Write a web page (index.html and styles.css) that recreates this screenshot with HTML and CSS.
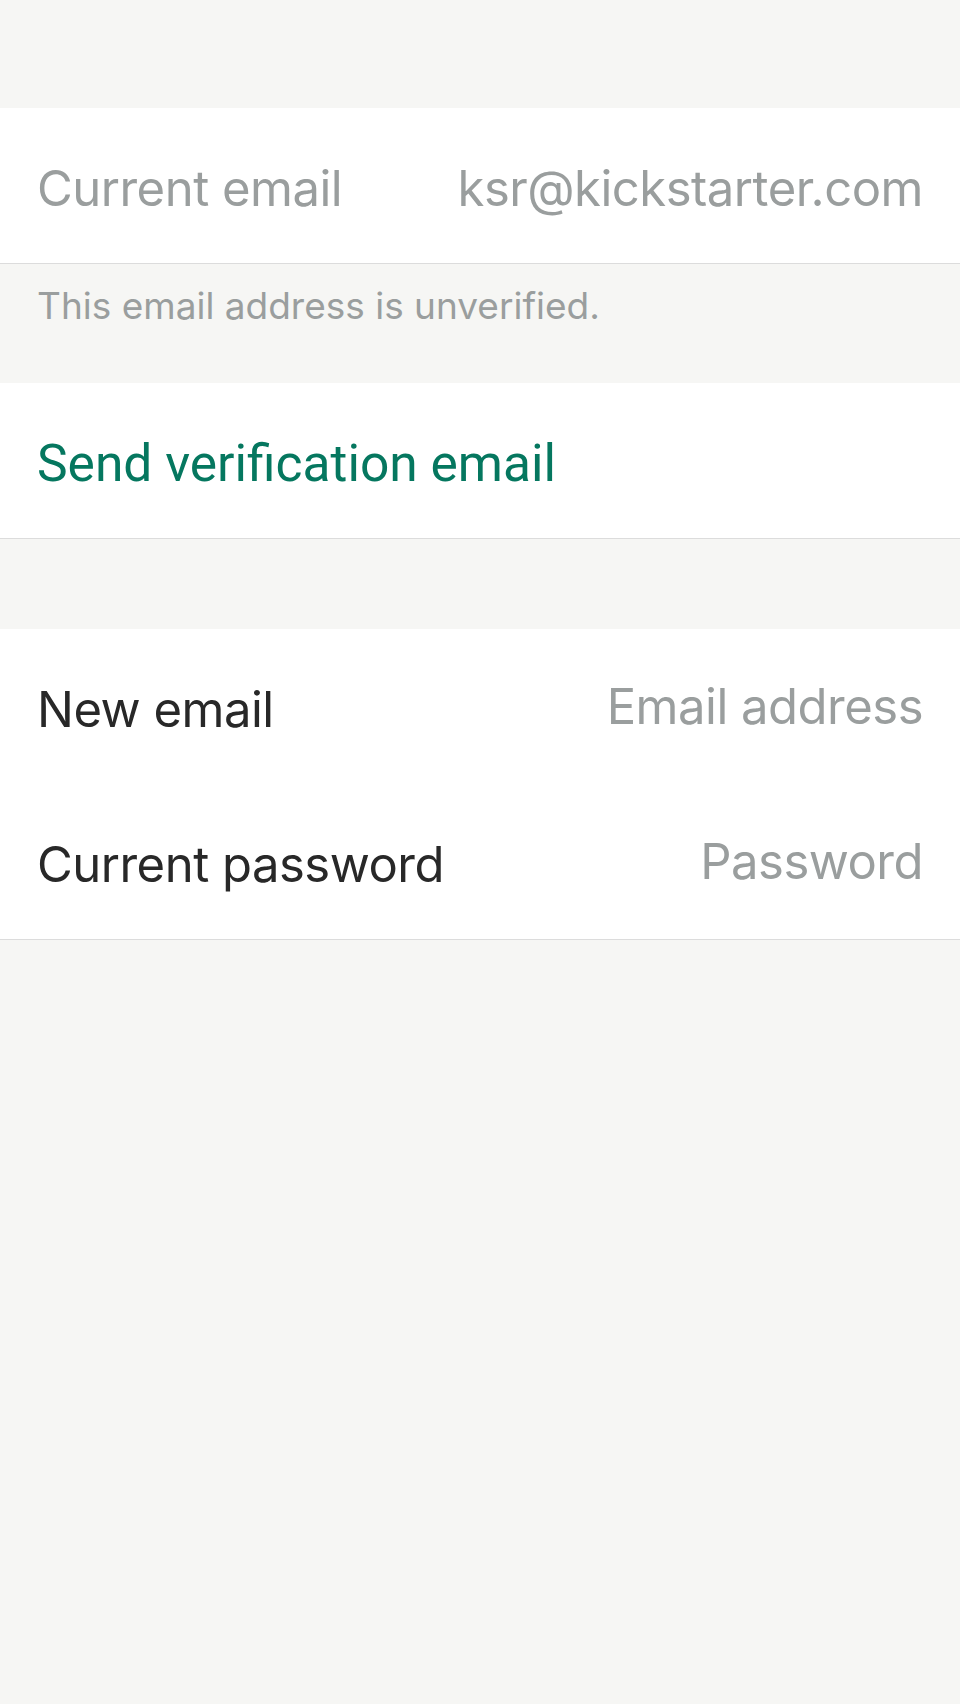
FILE: index.html
```html
<!DOCTYPE html>
<html>
<head>
<meta charset="utf-8">
<link rel="stylesheet" href="styles.css">
</head>
<body>
<div class="screen">
  <div class="top-gap"></div>
  <div class="group">
    <div class="row">
      <span class="label muted">Current email</span>
      <span class="value muted">ksr@kickstarter.com</span>
    </div>
  </div>
  <div class="note">This email address is unverified.</div>
  <div class="group">
    <div class="row">
      <span class="action">Send verification email</span>
    </div>
  </div>
  <div class="mid-gap"></div>
  <div class="group">
    <div class="row">
      <span class="label">New email</span>
      <span class="value placeholder">Email address</span>
    </div>
    <div class="row">
      <span class="label">Current password</span>
      <span class="value placeholder">Password</span>
    </div>
  </div>
</div>
</body>
</html>
```

FILE: styles.css
```css
html, body {
  margin: 0;
  padding: 0;
  background: #f6f6f4;
}
.screen {
  width: 960px;
  min-height: 1704px;
  background: #f6f6f4;
  font-family: Inter, "Noto Sans", sans-serif;
}
.top-gap { height: 108px; }
.mid-gap { height: 90px; }
.group {
  background: #ffffff;
  border-bottom: 1px solid #dcdcdc;
}
.row {
  height: 155px;
  box-sizing: border-box;
  display: flex;
  align-items: center;
  justify-content: space-between;
  padding: 5px 37px 0 37px;
  font-size: 49px;
  letter-spacing: -0.5px;
}
.label { color: #282828; }
.muted { color: #9a9e9e; }
.placeholder { color: #9a9e9e; margin-bottom: 6px; }
.action { color: #05775f; font-family: Roboto, sans-serif; font-size: 51.5px; letter-spacing: 0; }
.note {
  height: 119px;
  box-sizing: border-box;
  padding: 19px 37px 0;
  font-size: 37px;
  color: #9a9e9e;
  letter-spacing: 0;
}
```
